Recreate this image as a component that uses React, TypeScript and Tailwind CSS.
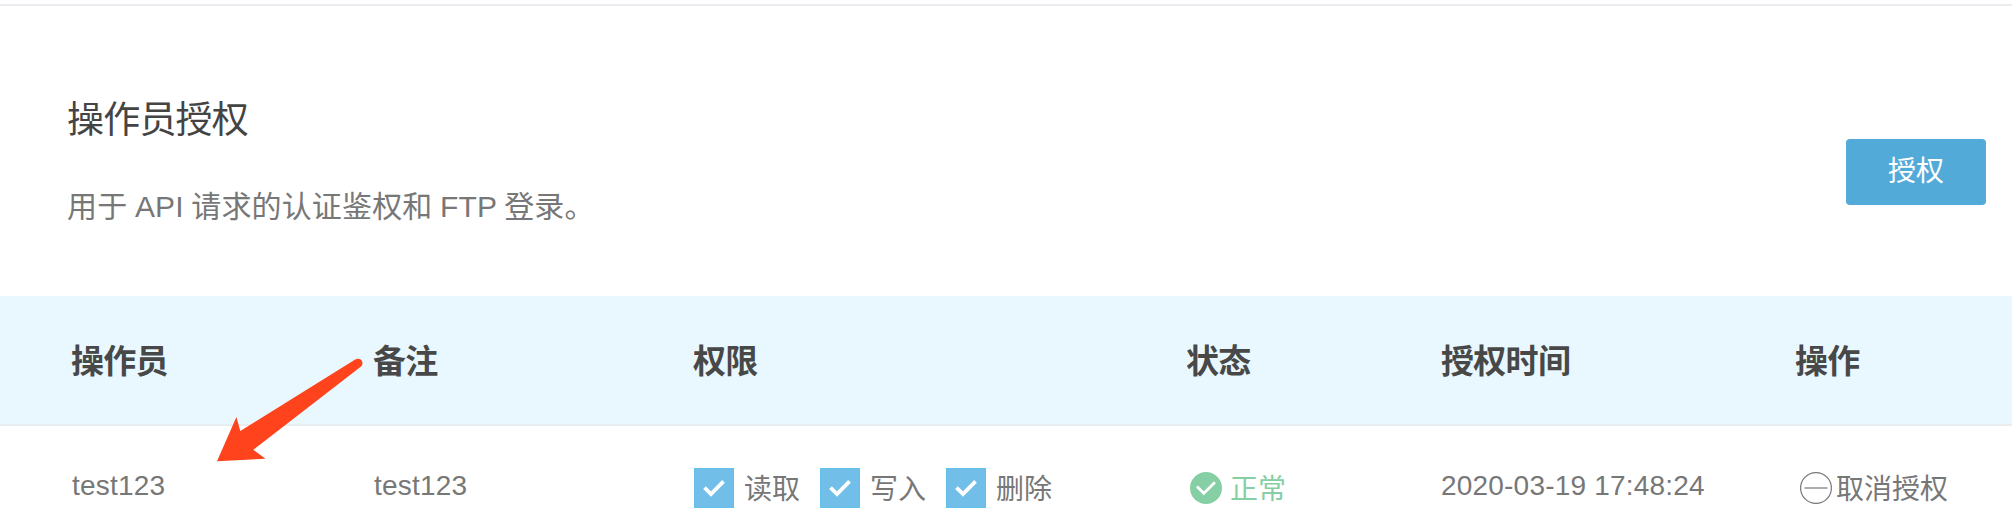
import React from "react";

const columns = ["操作员", "备注", "权限", "状态", "授权时间", "操作"];
const permissions = ["读取", "写入", "删除"];

function Permission({ label }: { label: string }) {
  return (
    <label className="flex items-center gap-2.5">
      <span className="flex size-10 items-center justify-center border border-[#62c0ea] bg-[#71bfe8]">
        <svg viewBox="0 0 38 38" className="size-full" fill="none" stroke="#fff" strokeWidth="3.8">
          <path d="M9.5 18.6 L16 25 L28.5 12.3" />
        </svg>
      </span>
      <span className="pt-[3px]">{label}</span>
    </label>
  );
}

function Arrow() {
  return (
    <svg
      className="pointer-events-none absolute top-[350px] left-[210px]"
      width="160"
      height="120"
      viewBox="210 350 160 120"
    >
      <path
        d="M217 461.2 L236.4 417 L240.3 431 L355.2 359.6 C358.3 357.8 361.2 359 362.2 361.6 C362.9 363.7 362.2 365.6 360.4 367 L253.3 449.8 L265.5 458.8 Z"
        fill="#ff431c"
      />
    </svg>
  );
}

export default function App() {
  return (
    <div className="relative flex h-[524px] w-[2012px] flex-col overflow-hidden bg-white pt-1 font-['Liberation_Sans','Noto_Sans_CJK_SC',sans-serif] text-[#777]">
      <header className="flex h-[292px] shrink-0 items-center justify-between border-t-2 border-[#ececf0] pr-[26px] pl-[67px]">
        <div className="flex flex-col gap-[37px] pt-[21px]">
          <h1 className="text-[37px] leading-[54px] tracking-[-0.8px] text-[#444]">操作员授权</h1>
          <p className="text-[30px] leading-[44px] tracking-[0.15px] [word-spacing:-0.9px]">用于 API 请求的认证鉴权和 FTP 登录。</p>
        </div>
        <button className="mt-[42px] flex h-[66px] w-[140px] items-center justify-center rounded bg-[#52aad9] text-[28px] text-white">
          授权
        </button>
      </header>

      <div className="grid h-[130px] shrink-0 grid-cols-[302px_320px_493px_255px_354px_1fr] items-center border-b-2 border-[#e9edf0] bg-[#e9f8ff] pt-[3px] pl-[71px] text-[33px] font-bold tracking-[-0.7px] text-[#484848]">
        {columns.map((name) => (
          <div key={name}>{name}</div>
        ))}
      </div>

      <div className="grid h-[124px] shrink-0 grid-cols-[302px_320px_493px_255px_354px_1fr] items-center pl-[71px] text-[28px] leading-10">
        <div className="pb-1 pl-px tracking-[0.2px]">test123</div>
        <div className="pb-1 pl-px tracking-[0.2px]">test123</div>
        <div className="flex gap-5 pl-px">
          {permissions.map((label) => (
            <Permission key={label} label={label} />
          ))}
        </div>
        <div className="flex items-center gap-2 pl-1 text-[#86cfa5]">
          <svg className="size-8" viewBox="0 0 32 32" fill="none">
            <circle cx="16" cy="16" r="16" fill="#86cfa5" />
            <path d="M7 14.5 L13.8 21.3 L25 10.2" stroke="#fff" strokeWidth="2.7" />
          </svg>
          <span className="pt-[3px]">正常</span>
        </div>
        <div className="pb-1 tracking-[0.2px]">2020-03-19 17:48:24</div>
        <div className="flex items-center gap-1 pl-[5px]">
          <svg className="size-8" viewBox="0 0 32 32" fill="none" stroke="#777" strokeWidth="1.2">
            <circle cx="16" cy="16" r="15.4" />
            <path d="M4.5 16 H27.5" />
          </svg>
          <span className="pt-[3px]">取消授权</span>
        </div>
      </div>
      <Arrow />
    </div>
  );
}
